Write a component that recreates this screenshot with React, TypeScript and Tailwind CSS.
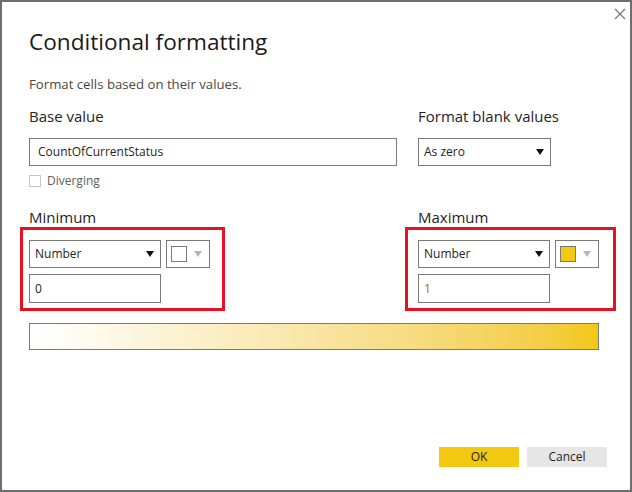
import React from "react";

function Arrow({ gray }: { gray?: boolean }) {
  return (
    <svg width="8" height="7" viewBox="0 0 8 7" className="shrink-0">
      <path d="M0 0 H8 L4 6 Z" fill={gray ? "#b4b4b4" : "#111"} />
    </svg>
  );
}

function Select({ label, width }: { label: string; width: string }) {
  return (
    <div className={`${width} h-[28px] border border-[#7a7a7a] bg-white flex items-center justify-between pl-[5px] pr-[6px] text-[12px] text-[#252423]`}>
      <span>{label}</span>
      <Arrow />
    </div>
  );
}

function ColorPick({ color }: { color?: string }) {
  return (
    <div className="w-[44px] h-[28px] border border-[#7a7a7a] bg-white flex items-center pl-[4px] pr-[7px] justify-between">
      <div className={`w-[16px] h-[16px] border border-[#7a7a7a] ${color ?? "bg-white"}`} />
      <Arrow gray />
    </div>
  );
}

function RangeGroup({ title, value, color, valueColor }: { title: string; value: string; color?: string; valueColor: string }) {
  return (
    <div className="flex flex-col">
      <div className="text-[15px] leading-[20px] text-[#252423]">{title}</div>
      <div className="relative mt-[13px] flex flex-col gap-[6px]">
        <div className="flex gap-[5px]">
          <Select label="Number" width="w-[132px]" />
          <ColorPick color={color} />
        </div>
        <div className={`w-[132px] h-[29px] border border-[#7a7a7a] flex items-center pl-[5px] text-[12px] ${valueColor}`}>{value}</div>
      </div>
    </div>
  );
}

export default function App() {
  return (
    <div
      className="relative w-[632px] h-[492px] bg-white border-2 border-[#6e6e6e] overflow-hidden"
      style={{ fontFamily: '"Open Sans", "Noto Sans", Arial, sans-serif' }}
    >
      <svg className="absolute left-[612px] top-[6px]" width="12" height="12" viewBox="0 0 12 12">
        <path d="M1 1 L11 11 M11 1 L1 11" stroke="#7a7a7a" strokeWidth="1.2" />
      </svg>

      {/* red annotation boxes */}
      <div className="absolute left-[18px] top-[225px] w-[205px] h-[84px] border-[3px] border-[#e81123]" />
      <div className="absolute left-[403px] top-[225px] w-[211px] h-[84px] border-[3px] border-[#e81123]" />

      <div className="flex flex-col pl-[27px] pt-[25px] pr-[23px]">
        <div className="text-[22.6px] leading-[30px] text-[#1b1a19]">Conditional formatting</div>
        <div className="mt-[18px] text-[13.2px] leading-[18px] text-[#4a4846]">Format cells based on their values.</div>

        <div className="mt-[13px] grid grid-cols-[368px_auto] gap-x-[21px]">
          <div className="flex flex-col">
            <div className="text-[15px] leading-[20px] text-[#252423]">Base value</div>
            <div className="mt-[12px] h-[28px] border border-[#7a7a7a] flex items-center pl-[8px] text-[12px] text-[#252423]">
              CountOfCurrentStatus
            </div>
            <div className="mt-[8px] flex items-center gap-[6px]">
              <div className="w-[12px] h-[12px] border-[1.5px] border-[#c6c6c6]" />
              <span className="text-[12px] leading-[14px] text-[#605e5c]">Diverging</span>
            </div>
          </div>
          <div className="flex flex-col">
            <div className="text-[15px] leading-[20px] text-[#252423]">Format blank values</div>
            <div className="mt-[12px]">
              <Select label="As zero" width="w-[133px]" />
            </div>
          </div>
        </div>

        <div className="mt-[19px] grid grid-cols-[368px_auto] gap-x-[21px]">
          <RangeGroup title="Minimum" value="0" valueColor="text-[#252423]" />
          <RangeGroup title="Maximum" value="1" color="bg-[#f2c811]" valueColor="text-[#b06a00]" />
        </div>

        <div className="mt-[20px] w-[570px] h-[27px] border border-[#7a7a7a] bg-gradient-to-r from-white to-[#f2c811]" />

        <div className="mt-[97px] flex justify-end gap-[8px]">
          <button className="w-[80px] h-[20px] bg-[#f2c811] text-[12px] text-[#252423]">OK</button>
          <button className="w-[80px] h-[20px] bg-[#e6e6e6] text-[12px] text-[#252423]">Cancel</button>
        </div>
      </div>
    </div>
  );
}
